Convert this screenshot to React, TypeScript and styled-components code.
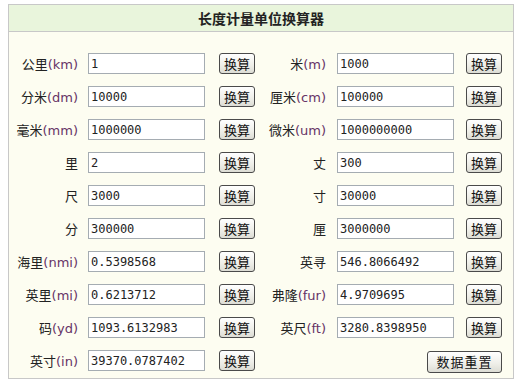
import React, { useState } from "react";
import styled, { createGlobalStyle } from "styled-components";

type Unit = {
  key: string;
  name: string;
  abbr?: string;
  perMeter: number;
};

const UNITS: Unit[] = [
  { key: "km", name: "公里", abbr: "km", perMeter: 0.001 },
  { key: "m", name: "米", abbr: "m", perMeter: 1 },
  { key: "dm", name: "分米", abbr: "dm", perMeter: 10 },
  { key: "cm", name: "厘米", abbr: "cm", perMeter: 100 },
  { key: "mm", name: "毫米", abbr: "mm", perMeter: 1000 },
  { key: "um", name: "微米", abbr: "um", perMeter: 1000000 },
  { key: "li", name: "里", perMeter: 0.002 },
  { key: "zhang", name: "丈", perMeter: 0.3 },
  { key: "chi", name: "尺", perMeter: 3 },
  { key: "cun", name: "寸", perMeter: 30 },
  { key: "fen", name: "分", perMeter: 300 },
  { key: "lii", name: "厘", perMeter: 3000 },
  { key: "nmi", name: "海里", abbr: "nmi", perMeter: 0.0005398568 },
  { key: "fathom", name: "英寻", perMeter: 0.5468066492 },
  { key: "mi", name: "英里", abbr: "mi", perMeter: 0.0006213712 },
  { key: "fur", name: "弗隆", abbr: "fur", perMeter: 0.0049709695 },
  { key: "yd", name: "码", abbr: "yd", perMeter: 1.0936132983 },
  { key: "ft", name: "英尺", abbr: "ft", perMeter: 3.280839895 },
  { key: "in", name: "英寸", abbr: "in", perMeter: 39.3700787402 },
];

const INITIAL: Record<string, string> = {
  km: "1",
  m: "1000",
  dm: "10000",
  cm: "100000",
  mm: "1000000",
  um: "1000000000",
  li: "2",
  zhang: "300",
  chi: "3000",
  cun: "30000",
  fen: "300000",
  lii: "3000000",
  nmi: "0.5398568",
  fathom: "546.8066492",
  mi: "0.6213712",
  fur: "4.9709695",
  yd: "1093.6132983",
  ft: "3280.8398950",
  in: "39370.0787402",
};

export default function App() {
  const [values, setValues] = useState<Record<string, string>>(INITIAL);

  const convert = (from: Unit) => {
    const n = parseFloat(values[from.key]);
    if (isNaN(n)) return;
    const meters = n / from.perMeter;
    const next: Record<string, string> = {};
    UNITS.forEach((u) => {
      const v = meters * u.perMeter;
      next[u.key] = Number.isInteger(v) ? String(v) : v.toFixed(7);
    });
    next[from.key] = values[from.key];
    setValues(next);
  };

  return (
    <>
      <GlobalStyle />
      <StBox>
        <StHeader>长度计量单位换算器</StHeader>
        <StGrid>
          {UNITS.map((u) => (
            <React.Fragment key={u.key}>
              <StLabel>
                {u.name}
                {u.abbr && <StAbbr>({u.abbr})</StAbbr>}
              </StLabel>
              <StInput
                value={values[u.key]}
                onChange={(e) =>
                  setValues({ ...values, [u.key]: e.target.value })
                }
              />
              <StButton onClick={() => convert(u)}>换算</StButton>
            </React.Fragment>
          ))}
          <StReset onClick={() => setValues(INITIAL)}>数据重置</StReset>
        </StGrid>
      </StBox>
    </>
  );
}

const GlobalStyle = createGlobalStyle`
  body {
    margin: 0;
    background: #fff;
    font-family: "DejaVu Sans", "Noto Sans CJK SC", sans-serif;
  }
`;

const StBox = styled.section`
  margin: 4px 6px 0 8px;
  width: 504px;
  border: 1px solid #c8c8c8;
  background: #fdfdf1;
`;

const StHeader = styled.h1`
  margin: 0;
  height: 26px;
  line-height: 26px;
  border-bottom: 1px solid #c8c8c8;
  background: #e9f5dc;
  text-align: center;
  font-family: "Noto Sans CJK SC", sans-serif;
  font-size: 14px;
  font-weight: bold;
  color: #222;
`;

const StGrid = styled.div`
  display: grid;
  grid-template-columns: 79px 131px 36px 82px 129px 36px;
  grid-auto-rows: 33px;
  align-items: center;
  padding: 15px 0 1px 0;
`;

const StLabel = styled.label`
  padding-right: 10px;
  text-align: right;
  font-size: 13px;
  color: #222;
  white-space: nowrap;

  &:nth-of-type(even) {
    padding-right: 11px;
  }
`;

const StAbbr = styled.span`
  color: #663366;
`;

const StInput = styled.input`
  box-sizing: border-box;
  width: 117px;
  height: 21px;
  padding: 0 2px;
  border: 1px solid #a5acb2;
  background: #fff;
  font-family: "DejaVu Sans Mono", monospace;
  font-size: 12px;
  color: #222;
  outline: none;
`;

const StButton = styled.button`
  box-sizing: border-box;
  width: 36px;
  height: 21px;
  padding: 0;
  border: 1px solid #4a4a4a;
  border-radius: 3px;
  background: linear-gradient(#ffffff, #eeeee8 60%, #dcdcd4);
  font-family: "Noto Sans CJK SC", sans-serif;
  font-size: 13px;
  line-height: 19px;
  color: #111;
  cursor: pointer;
`;

const StReset = styled(StButton)`
  grid-column: 5 / 7;
  justify-self: end;
  width: 75px;
  height: 22px;
  margin-top: 2px;
  letter-spacing: 1px;
`;
